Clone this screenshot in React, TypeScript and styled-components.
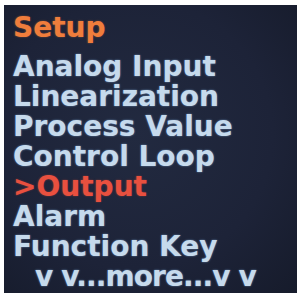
import * as React from "react";
import styled, { createGlobalStyle } from "styled-components";

const GlobalStyle = createGlobalStyle`
  html, body {
    margin: 0;
    padding: 0;
    background: #ffffff;
  }
`;

const Screen = styled.div`
  box-sizing: border-box;
  width: 293px;
  height: 288px;
  margin: 5px 0 0 4px;
  padding: 8px 0 0 9px;
  background: radial-gradient(
    ellipse at 45% 45%,
    #222a40 0%,
    #1d2338 60%,
    #161b2b 100%
  );
  overflow: hidden;
  font-family: "DejaVu Sans", "Verdana", sans-serif;
  font-weight: bold;
  font-size: 28px;
  line-height: 30px;
`;

const Title = styled.div`
  color: #ef7d3c;
  margin-bottom: 9px;
  text-shadow: 0 0 2px rgba(240, 130, 60, 0.5);
`;

const Item = styled.div<{ $selected?: boolean; $indent?: number; $tight?: boolean }>`
  white-space: pre;
  color: ${(p) => (p.$selected ? "#e8503f" : "#c6daec")};
  padding-left: ${(p) => p.$indent ?? 0}px;
  letter-spacing: ${(p) => (p.$tight ? "-0.9px" : "0")};
  text-shadow: ${(p) =>
    p.$selected
      ? "0 0 2px rgba(235, 80, 60, 0.5)"
      : "0 0 2px rgba(140, 190, 240, 0.7)"};
`;

const items = [
  "Analog Input",
  "Linearization",
  "Process Value",
  "Control Loop",
  ">Output",
  "Alarm",
  "Function Key",
];

export default function App() {
  return (
    <>
      <GlobalStyle />
      <Screen>
        <Title>Setup</Title>
        {items.map((label) => (
          <Item key={label} $selected={label.startsWith(">")}>
            {label}
          </Item>
        ))}
        <Item $indent={22} $tight>
          v v...more...v v
        </Item>
      </Screen>
    </>
  );
}
